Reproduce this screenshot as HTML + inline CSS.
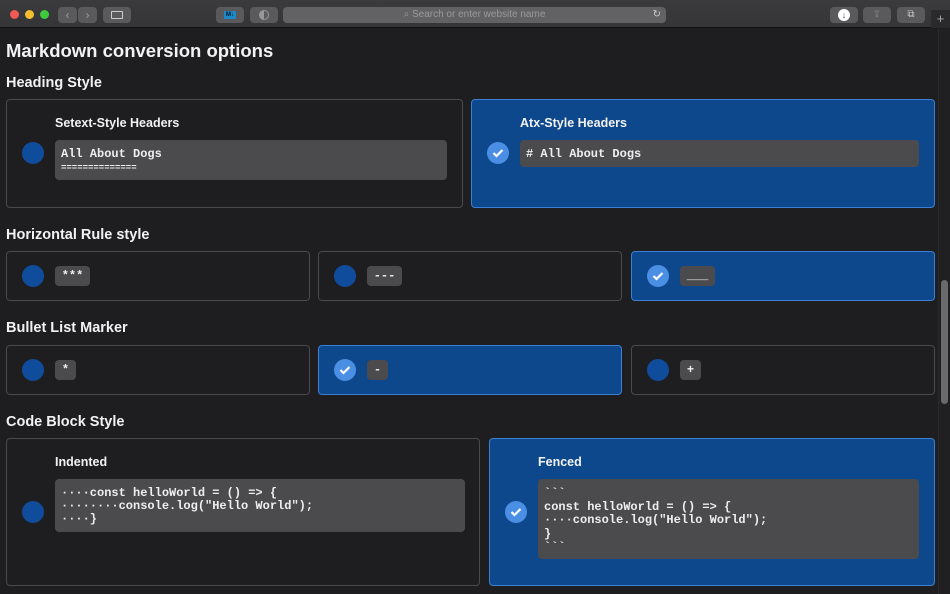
<!DOCTYPE html>
<html><head><meta charset="utf-8"><style>
*{margin:0;padding:0;box-sizing:border-box}
body{width:950px;height:594px;overflow:hidden;background:#1e1e21;font-family:"Liberation Sans",sans-serif;color:#f2f2f2;position:relative}
.a{position:absolute}
.tb{left:0;top:0;width:950px;height:28px;background:linear-gradient(#3b3b3d,#353537);border-bottom:1px solid #111}
.btn{background:#5a5a5c;border-radius:4px;height:16px;top:7px}
.h1{font-weight:bold;font-size:18.5px;left:6px;top:40px}
.h2{font-weight:bold;font-size:14.5px;left:6px}
.card{border:1px solid #4a4a4d;border-radius:4px;background:#1e1e21}
.card.sel{background:#0d478c;border-color:#3d7fd4}
.rad{width:22px;height:22px;border-radius:50%;background:#0f4d9c}
.rad.on{background:#4a8fe3}
.rad.on svg{position:absolute;left:5px;top:6px}
.lbl{font-weight:bold;font-size:12.5px}
.code{background:#4b4b4d;border-radius:4px;font-family:"Liberation Mono",monospace;font-weight:bold;font-size:12px;color:#eee;white-space:pre;line-height:13px;padding:8px 6px}
.pill{background:#4b4b4d;border-radius:4px;font-family:"Liberation Mono",monospace;font-weight:bold;font-size:12px;color:#eee;text-align:center;line-height:20px;height:20px}
</style></head><body>
<div class="a tb"></div>
<div class="a" style="left:10px;top:10px;width:9px;height:9px;border-radius:50%;background:#ee5a52"></div>
<div class="a" style="left:25px;top:10px;width:9px;height:9px;border-radius:50%;background:#f5bd30"></div>
<div class="a" style="left:40px;top:10px;width:9px;height:9px;border-radius:50%;background:#3fc93c"></div>
<div class="a btn" style="left:58px;width:19px;color:#999;font-size:12px;text-align:center;line-height:16px">‹</div>
<div class="a btn" style="left:78px;width:19px;color:#999;font-size:12px;text-align:center;line-height:16px">›</div>
<div class="a btn" style="left:103px;width:28px"><div class="a" style="left:8px;top:4px;width:12px;height:8px;border:1px solid #ccc;border-radius:1px"></div></div>
<div class="a btn" style="left:216px;width:28px"><div class="a" style="left:8px;top:4px;width:12px;height:8px;background:#1c8ac8;border-radius:1px;font-size:6px;color:#012;font-weight:bold;line-height:8px;text-align:center">M↓</div></div>
<div class="a btn" style="left:250px;width:28px"><div class="a" style="left:9px;top:3px;width:10px;height:10px;border-radius:50%;border:1px solid #999;background:linear-gradient(90deg,#999 50%,transparent 50%)"></div></div>
<div class="a btn" style="left:283px;width:383px;background:#626264;color:#9a9a9a;font-size:10px;line-height:16px;text-align:center">⌕ Search or enter website name<span style="position:absolute;right:5px;color:#ccc">↻</span></div>
<div class="a btn" style="left:830px;width:28px"><div class="a" style="left:8px;top:2px;width:12px;height:12px;border-radius:50%;background:#fff;color:#444;font-size:9px;line-height:12px;text-align:center;font-weight:bold">↓</div></div>
<div class="a btn" style="left:863px;width:28px;color:#888;font-size:10px;text-align:center;line-height:16px">⇪</div>
<div class="a btn" style="left:897px;width:28px;color:#ccc;font-size:10px;text-align:center;line-height:16px">⧉</div>
<div class="a" style="left:931px;top:10px;width:19px;height:18px;background:#2a2a2c;color:#aaa;font-size:13px;text-align:center;line-height:18px">+</div>
<div class="a" style="left:938px;top:29px;width:12px;height:565px;background:#202023;border-left:1px solid #2c2c2e"></div>
<div class="a" style="left:941px;top:280px;width:7px;height:124px;border-radius:4px;background:#6a6a6c"></div>

<div class="a h1">Markdown conversion options</div>
<div class="a h2" style="top:75px">Heading Style</div>
<div class="a card" style="left:6px;top:99px;width:457px;height:109px"></div>
<div class="a rad" style="left:22px;top:142px"></div>
<div class="a lbl" style="left:55px;top:116px">Setext-Style Headers</div>
<div class="a code" style="left:55px;top:140px;width:392px;height:40px">All About Dogs
<span style="font-size:9px">==============</span></div>
<div class="a card sel" style="left:471px;top:99px;width:464px;height:109px"></div>
<div class="a rad on" style="left:487px;top:142px"><svg width="12" height="10" viewBox="0 0 12 10"><path d="M1.5 5 L4.5 8 L10.5 2" stroke="#fff" stroke-width="2.2" fill="none"/></svg></div>
<div class="a lbl" style="left:520px;top:116px">Atx-Style Headers</div>
<div class="a code" style="left:520px;top:140px;width:399px;height:27px"># All About Dogs</div>

<div class="a h2" style="top:227px">Horizontal Rule style</div>
<div class="a card" style="left:6px;top:251px;width:304px;height:50px"></div>
<div class="a rad" style="left:22px;top:265px"></div>
<div class="a pill" style="left:55px;top:266px;width:35px">***</div>
<div class="a card" style="left:318px;top:251px;width:304px;height:50px"></div>
<div class="a rad" style="left:334px;top:265px"></div>
<div class="a pill" style="left:367px;top:266px;width:35px">---</div>
<div class="a card sel" style="left:631px;top:251px;width:304px;height:50px"></div>
<div class="a rad on" style="left:647px;top:265px"><svg width="12" height="10" viewBox="0 0 12 10"><path d="M1.5 5 L4.5 8 L10.5 2" stroke="#fff" stroke-width="2.2" fill="none"/></svg></div>
<div class="a pill" style="left:680px;top:266px;width:35px">___</div>

<div class="a h2" style="top:320px">Bullet List Marker</div>
<div class="a card" style="left:6px;top:345px;width:304px;height:50px"></div>
<div class="a rad" style="left:22px;top:359px"></div>
<div class="a pill" style="left:55px;top:360px;width:21px">*</div>
<div class="a card sel" style="left:318px;top:345px;width:304px;height:50px"></div>
<div class="a rad on" style="left:334px;top:359px"><svg width="12" height="10" viewBox="0 0 12 10"><path d="M1.5 5 L4.5 8 L10.5 2" stroke="#fff" stroke-width="2.2" fill="none"/></svg></div>
<div class="a pill" style="left:367px;top:360px;width:21px">-</div>
<div class="a card" style="left:631px;top:345px;width:304px;height:50px"></div>
<div class="a rad" style="left:647px;top:359px"></div>
<div class="a pill" style="left:680px;top:360px;width:21px">+</div>

<div class="a h2" style="top:414px">Code Block Style</div>
<div class="a card" style="left:6px;top:438px;width:474px;height:148px"></div>
<div class="a rad" style="left:22px;top:501px"></div>
<div class="a lbl" style="left:55px;top:455px">Indented</div>
<div class="a code" style="left:55px;top:479px;width:410px;height:53px">····const helloWorld = () =&gt; {
········console.log("Hello World");
····}</div>
<div class="a card sel" style="left:489px;top:438px;width:446px;height:148px"></div>
<div class="a rad on" style="left:505px;top:501px"><svg width="12" height="10" viewBox="0 0 12 10"><path d="M1.5 5 L4.5 8 L10.5 2" stroke="#fff" stroke-width="2.2" fill="none"/></svg></div>
<div class="a lbl" style="left:538px;top:455px">Fenced</div>
<div class="a code" style="left:538px;top:479px;width:381px;height:80px;padding-top:8px;line-height:13.5px">&#96;&#96;&#96;
const helloWorld = () =&gt; {
····console.log("Hello World");
}
&#96;&#96;&#96;</div>
</body></html>
